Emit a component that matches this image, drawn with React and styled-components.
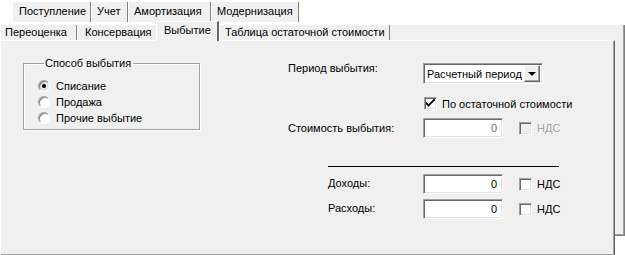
import React from 'react';
import styled, { createGlobalStyle } from 'styled-components';

const GlobalStyle = createGlobalStyle`
  html, body {
    margin: 0;
    padding: 0;
    background: #ffffff;
  }
  body {
    font-family: 'Liberation Sans', Arial, sans-serif;
    font-size: 11px;
    color: #000000;
  }
`;

const Window = styled.div`
  width: 625px;
  height: 255px;
  background: #ffffff;
  overflow: hidden;
`;

const TabRow = styled.div`
  display: flex;
  align-items: flex-end;
  height: ${(p) => p.$height}px;
  padding-left: ${(p) => p.$indent || 0}px;
  padding-top: ${(p) => p.$top || 0}px;
`;

const Tab = styled.div`
  box-sizing: border-box;
  width: ${(p) => p.$w}px;
  height: 100%;
  background: #f0f0f0;
  border-right: ${(p) => (p.$noEdge ? 'none' : '1px solid #808080')};
  box-shadow: inset 1px 0 0 #ffffff;
  padding-left: ${(p) => p.$pad || 7}px;
  line-height: ${(p) => p.$lh || 18}px;
  white-space: nowrap;
`;

const ActiveTab = styled.div`
  box-sizing: border-box;
  position: relative;
  z-index: 2;
  width: ${(p) => p.$w}px;
  height: 20px;
  margin-top: -4px;
  margin-bottom: -1px;
  background: #f0f0f0;
  border-top: 1px solid #ffffff;
  border-left: 1px solid #ffffff;
  border-right: 2px solid #696969;
  padding-left: 7px;
  line-height: 17px;
  white-space: nowrap;
`;

const Frame = styled.div`
  box-sizing: border-box;
  width: 625px;
  height: 211px;
  margin-top: 3px;
  background: #f0f0f0;
  border-right: 1px solid #808080;
  border-bottom: 1px solid #808080;
  box-shadow: inset -1px -1px 0 #a0a0a0;
`;

const Panel = styled.div`
  position: relative;
  box-sizing: border-box;
  width: 615px;
  height: 216px;
  background: #f0f0f0;
  border-top: 1px solid #ffffff;
  border-left: 1px solid #ffffff;
  border-right: 1px solid #696969;
  border-bottom: 1px solid #696969;
  box-shadow: inset -1px -1px 0 #a0a0a0;
  display: flex;
  align-items: flex-start;
`;

const GroupBox = styled.fieldset`
  box-sizing: border-box;
  width: 177px;
  height: 73px;
  margin: 16px 0 0 22px;
  padding: 0 0 0 14px;
  border: 1px solid #a0a0a0;
  box-shadow: 1px 1px 0 #ffffff, inset 1px 1px 0 #ffffff;
  flex-shrink: 0;
`;

const Legend = styled.legend`
  padding: 0 2px 0 1px;
  margin-left: 6px;
  line-height: 12px;
`;

const RadioRow = styled.label`
  display: flex;
  align-items: center;
  height: 16px;
  gap: 6px;
  margin-top: ${(p) => (p.$first ? 9 : 0)}px;
`;

const RadioCircle = styled.span`
  box-sizing: border-box;
  width: 12px;
  height: 12px;
  border-radius: 50%;
  border: 1px solid;
  border-color: #a0a0a0 #ffffff #ffffff #a0a0a0;
  background: ${(p) => (p.$checked ? '#e3e3e3' : '#ffffff')};
  box-shadow: inset 1px 1px 0 #808080;
  display: flex;
  align-items: center;
  justify-content: center;
  &::after {
    content: '';
    width: 4px;
    height: 4px;
    border-radius: 50%;
    background: ${(p) => (p.$checked ? '#000000' : 'transparent')};
  }
`;

const RightSection = styled.div`
  margin-left: 88px;
  width: 330px;
  display: flex;
  flex-direction: column;
`;

const Row = styled.div`
  display: flex;
  align-items: ${(p) => p.$align || 'center'};
  height: ${(p) => p.$h}px;
  margin-top: ${(p) => p.$mt}px;
  padding-left: ${(p) => p.$indent || 0}px;
`;

const Label = styled.div`
  width: ${(p) => p.$w}px;
  flex-shrink: 0;
  padding-top: ${(p) => p.$pt || 0}px;
  margin-top: ${(p) => p.$shift || 0}px;
  white-space: nowrap;
`;

const Sunken = styled.div`
  box-sizing: border-box;
  border: 1px solid;
  border-color: #a0a0a0 #ffffff #ffffff #a0a0a0;
  box-shadow: inset 1px 1px 0 #696969, inset -1px -1px 0 #e3e3e3;
  background: #ffffff;
`;

const Combo = styled(Sunken)`
  width: 120px;
  height: 21px;
  display: flex;
  align-items: center;
  padding: 0 2px 0 3px;
  justify-content: space-between;
`;

const ComboButton = styled.div`
  box-sizing: border-box;
  width: 16px;
  height: 17px;
  background: #f0f0f0;
  border: 1px solid;
  border-color: #ffffff #696969 #696969 #ffffff;
  box-shadow: inset -1px -1px 0 #a0a0a0;
  display: flex;
  align-items: center;
  justify-content: center;
`;

const Arrow = styled.span`
  width: 0;
  height: 0;
  border-left: 4px solid transparent;
  border-right: 4px solid transparent;
  border-top: 4px solid #000000;
  margin-top: 1px;
`;

const NumberField = styled(Sunken)`
  width: 80px;
  height: 20px;
  flex-shrink: 0;
  text-align: right;
  padding-right: 5px;
  line-height: 19px;
  color: ${(p) => (p.$disabled ? '#6d6d6d' : '#000000')};
`;

const CheckBox = styled.span`
  box-sizing: border-box;
  width: 13px;
  height: 13px;
  flex-shrink: 0;
  border: 1px solid;
  border-color: #a0a0a0 #ffffff #ffffff #a0a0a0;
  box-shadow: inset 1px 1px 0 #696969, inset -1px -1px 0 #e3e3e3;
  background: ${(p) => (p.$disabled ? '#f0f0f0' : '#ffffff')};
  display: flex;
  align-items: center;
  justify-content: center;
  margin-left: ${(p) => p.$ml || 0}px;
`;

const CheckText = styled.span`
  margin-left: ${(p) => p.$ml || 5}px;
  white-space: nowrap;
  color: ${(p) => (p.$disabled ? '#a0a0a0' : '#000000')};
  text-shadow: ${(p) => (p.$disabled ? '1px 1px 0 #ffffff' : 'none')};
`;

const Separator = styled.div`
  width: 231px;
  height: 1px;
  background: #000000;
  margin-top: 28px;
  margin-left: 40px;
`;

function Check() {
  return (
    <svg width="9" height="9" viewBox="0 0 7 7">
      <path d="M0 2 L0 4 L2 6 L7 1 L7 -1 L2 4 Z" fill="#000000" />
    </svg>
  );
}

function Radio({ checked, children, first }) {
  return (
    <RadioRow $first={first}>
      <RadioCircle $checked={checked} />
      <span>{children}</span>
    </RadioRow>
  );
}

export default function App() {
  return (
    <Window>
      <GlobalStyle />
      <TabRow $height={20} $indent={12} $top={2}>
        <Tab $w={79}>Поступление</Tab>
        <Tab $w={37} $pad={6}>Учет</Tab>
        <Tab $w={83} $pad={6}>Амортизация</Tab>
        <Tab $w={88} $pad={6}>Модернизация</Tab>
      </TabRow>
      <Frame>
        <TabRow $height={15}>
          <Tab $w={77} $pad={5} $lh={15}>Переоценка</Tab>
          <Tab $w={79} $pad={8} $lh={15} $noEdge>Консервация</Tab>
          <ActiveTab $w={63}>Выбытие</ActiveTab>
          <Tab $w={171} $pad={6} $lh={15}>Таблица остаточной стоимости</Tab>
        </TabRow>
        <Panel>
          <GroupBox>
            <Legend>Способ выбытия</Legend>
            <Radio checked first>Списание</Radio>
            <Radio>Продажа</Radio>
            <Radio>Прочие выбытие</Radio>
          </GroupBox>
          <RightSection>
            <Row $h={21} $mt={22} $align="flex-start">
              <Label $w={135} $shift={-1}>Период выбытия:</Label>
              <Combo>
                <span>Расчетный период</span>
                <ComboButton>
                  <Arrow />
                </ComboButton>
              </Combo>
            </Row>
            <Row $h={13} $mt={13}>
              <CheckBox $ml={136}>
                <Check />
              </CheckBox>
              <CheckText>По остаточной стоимости</CheckText>
            </Row>
            <Row $h={20} $mt={8}>
              <Label $w={135}>Стоимость выбытия:</Label>
              <NumberField $disabled>0</NumberField>
              <CheckBox $ml={16} $disabled />
              <CheckText $disabled>НДС</CheckText>
            </Row>
            <Separator />
            <Row $h={20} $mt={7} $indent={40}>
              <Label $w={95} $shift={-2}>Доходы:</Label>
              <NumberField>0</NumberField>
              <CheckBox $ml={16} />
              <CheckText>НДС</CheckText>
            </Row>
            <Row $h={20} $mt={5} $indent={40}>
              <Label $w={95} $shift={-2}>Расходы:</Label>
              <NumberField>0</NumberField>
              <CheckBox $ml={16} />
              <CheckText>НДС</CheckText>
            </Row>
          </RightSection>
        </Panel>
      </Frame>
    </Window>
  );
}
